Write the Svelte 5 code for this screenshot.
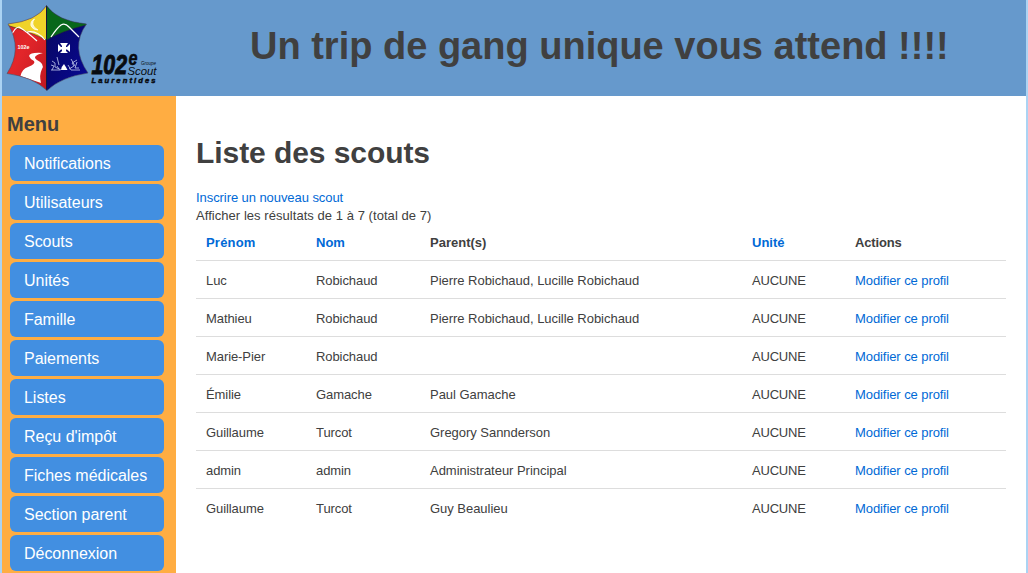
<script>
  const menu = ['Notifications', 'Utilisateurs', 'Scouts', 'Unités', 'Famille', 'Paiements', 'Listes', "Reçu d'impôt", 'Fiches médicales', 'Section parent', 'Déconnexion'];
  const rows = [
    ['Luc', 'Robichaud', 'Pierre Robichaud, Lucille Robichaud'],
    ['Mathieu', 'Robichaud', 'Pierre Robichaud, Lucille Robichaud'],
    ['Marie-Pier', 'Robichaud', ''],
    ['Émilie', 'Gamache', 'Paul Gamache'],
    ['Guillaume', 'Turcot', 'Gregory Sannderson'],
    ['admin', 'admin', 'Administrateur Principal'],
    ['Guillaume', 'Turcot', 'Guy Beaulieu']
  ];
</script>

<div class="page">
  <header>
    <svg class="logo" width="174" height="96" viewBox="2 0 174 96" role="img" aria-label="102e Groupe Scout Laurentides">
      <defs>
        <clipPath id="star"><path d="M46.500 5.500Q57 21 86.500 24Q70 47 88 73Q61 77 47 90.500Q33 77 7 73.500Q23 49 8 24Q37 21 46.500 5.500Z" /></clipPath>
        <linearGradient id="red" x2="1" y2="1"><stop stop-color="#ce2026" /><stop offset=".5" stop-color="#e3262a" /><stop offset="1" stop-color="#bd1620" /></linearGradient>
        <linearGradient id="blue" x2="1" y2="1"><stop stop-color="#08085a" /><stop offset=".5" stop-color="#07077a" /><stop offset="1" stop-color="#0a0aa0" /></linearGradient>
      </defs>
      <g clip-path="url(#star)">
        <path d="M0 0H47V96H0Z" fill="url(#red)" />
        <path d="M46 0H96V96H46Z" fill="url(#blue)" />
        <path d="M6 23L46 4V40Q31 32 8 25.500Z" fill="#f0d329" />
        <path d="M46 4L90 22L86 25Q62 31 46.500 40Z" fill="#08671a" />
        <path d="M8 25.500Q31 32 46.500 40Q62 31 86 25" fill="none" stroke="#25213b" stroke-opacity=".7" stroke-width=".8" />
        <path d="M10.500 37Q15 27 19 27Q26 31 37 41M27 32Q37 30 45 40" fill="none" stroke="#fff" stroke-width="1.200" />
        <path d="M51 37Q57 28 61 25Q65 22.500 69 27L79 37" fill="none" stroke="#fff" stroke-width="1.300" />
        <path d="M34.500 19Q30 21 31 26Q33 30 38 30Q33 27 32.800 24Q32.500 21 34.500 19Z" fill="#fff6bd" stroke="#fff" stroke-width=".7" />
        <path d="M43 53Q30 52 29 56Q30 59 34 61Q36 64 28 67Q22 69 20.500 76L41 83Q39 75 42 69Q45 64 37 60Q31 56 43 53Z" fill="#fff" />
        <path d="M60 43H68L66 46V47H67L70 44V52L67 49.500H66V51L68 53H60L62 51V49.500H61L58 52V44L61 47H62V46Z" fill="#fff" />
        <path d="M64 64Q66 67 67.500 70H61Q61 67 64 64Z" fill="#fff" />
        <path d="M52 61L55 63L55 67L61 70M52 70L54 66L51 65M57 57L59 65M51 70H60M69 69L74 66L72 63L77 60M71 59L75 66M77 62L75 68H79M68 65L71 70H80M57 66L59 69" fill="none" stroke="#c5cef0" stroke-width=".8" />
        <path d="M46.500 4V92" stroke="#15153b" stroke-width="1" />
      </g>
      <path d="M46.500 5.500Q57 21 86.500 24Q70 47 88 73Q61 77 47 90.500Q33 77 7 73.500Q23 49 8 24Q37 21 46.500 5.500Z" fill="none" stroke="#454d63" stroke-opacity=".55" />
      <text x="17.500" y="48.500" class="tiny" textLength="12" lengthAdjust="spacingAndGlyphs">102e</text>
      <text x="91.500" y="73.500" class="number" textLength="35.500" lengthAdjust="spacingAndGlyphs">102</text>
      <text x="128.500" y="65" class="sup" textLength="9" lengthAdjust="spacingAndGlyphs">e</text>
      <text x="141" y="64.500" class="groupe" textLength="15" lengthAdjust="spacingAndGlyphs">Groupe</text>
      <text x="127.500" y="74.500" class="scout" textLength="29" lengthAdjust="spacingAndGlyphs">Scout</text>
      <text x="91.500" y="83" class="region" textLength="64">Laurentides</text>
    </svg>
    <div class="slogan">Un trip de gang unique vous attend !!!!</div>
  </header>
  <div class="body">
    <nav>
      <h2>Menu</h2>
      <ul>
        {#each menu as item}<li><a href="#menu">{item}</a></li>{/each}
      </ul>
    </nav>
    <main>
      <h1>Liste des scouts</h1>
      <a class="add" href="#new">Inscrire un nouveau scout</a>
      <p>Afficher les résultats de 1 à 7 (total de 7)</p>
      <table>
        <colgroup><col style="width:110px" /><col style="width:114px" /><col style="width:322px" /><col style="width:103px" /><col style="width:161px" /></colgroup>
        <thead>
          <tr><th><a class="first" href="#prenom">Prénom</a></th><th><a href="#nom">Nom</a></th><th>Parent(s)</th><th><a href="#unite">Unité</a></th><th class="actions">Actions</th></tr>
        </thead>
        <tbody>
          {#each rows as [first, last, parents]}
            <tr><td>{first}</td><td>{last}</td><td class="parents">{parents}</td><td class="unit">AUCUNE</td><td><a href="#edit">Modifier ce profil</a></td></tr>
          {/each}
        </tbody>
      </table>
    </main>
  </div>
</div>

<style>
  :global(body) { margin: 0; overflow: hidden; }
  .page { box-sizing: border-box; height: 573px; overflow: hidden; display: flex; flex-direction: column; border: solid #abd3f3; border-width: 0 2px; background: #fff; color: #404040; font: 13px/18px "Liberation Sans", Arial, sans-serif; }
  header { height: 96px; flex: none; display: flex; background: #6699cc; }
  .logo { flex: none; }
  .logo text { font-family: "Liberation Sans", Arial, sans-serif; font-style: italic; fill: #080b10; }
  .logo .tiny { font-size: 5.5px; font-weight: bold; font-style: normal; fill: #fff; }
  .logo .number { font-size: 28px; font-weight: bold; stroke: #080b10; stroke-width: 1px; }
  .logo .sup { font-size: 20px; font-weight: bold; stroke: #080b10; stroke-width: .5px; }
  .logo .groupe { font-size: 4.5px; }
  .logo .scout { font-size: 11.5px; }
  .logo .region { font-size: 7.5px; font-weight: bold; stroke: #080b10; stroke-width: .5px; }
  .slogan { margin-left: 74px; padding-top: 24px; font-size: 38px; line-height: 44px; font-weight: bold; white-space: nowrap; }
  .body { flex: 1; display: flex; min-height: 0; }
  nav { width: 174px; flex: none; background: #ffad42; }
  h2 { margin: 16px 0 9px 5px; font-size: 20px; line-height: 24px; }
  ul { margin: 0; padding: 0 12px 0 8px; list-style: none; display: grid; gap: 3px; }
  li a { display: block; height: 36px; padding-left: 14px; border-radius: 6px; background: #428fe1; color: #fff; font-size: 16px; line-height: 37px; letter-spacing: -.03px; }
  a { color: #0069d6; text-decoration: none; }
  main { flex: 1; padding: 38px 20px 0; }
  h1 { margin: 0 0 18px; font-size: 30px; line-height: 37px; letter-spacing: -.07px; }
  .add { display: block; letter-spacing: -.07px; }
  p { margin: 0; letter-spacing: .05px; }
  table { width: 810px; table-layout: fixed; border-collapse: separate; border-spacing: 0; }
  th, td { height: 38px; box-sizing: border-box; padding: 11px 0 0 10px; text-align: left; vertical-align: top; white-space: nowrap; }
  td { border-top: 1px solid #ddd; letter-spacing: -.08px; }
  td.parents { letter-spacing: -.03px; }
  td.unit { letter-spacing: -.2px; }
  th { height: 35px; padding-top: 9px; }
  th .first { letter-spacing: .2px; }
  th.actions { letter-spacing: -.15px; }
</style>
